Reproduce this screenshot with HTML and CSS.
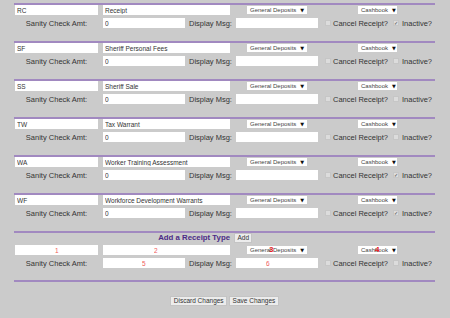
FILE: index.html
```html
<!DOCTYPE html>
<html lang="en">
<head>
    <meta charset="UTF-8">
    <title>Receipt Types</title>
    <link rel="stylesheet" href="styles.css">
</head>
<body>
    <div class="container">
        <div class="receipt-type">
            <div class="line-one">
                <input class="code" value="RC">
                <input class="name" value="Receipt">
                <span class="dropdown fund">General Deposits<span class="arrow">▼</span></span>
                <span class="dropdown book">Cashbook<span class="arrow">▼</span></span>
            </div>
            <div class="line-two">
                <span class="sanity-label">Sanity Check Amt:</span>
                <input class="amount" value="0">
                <span class="msg-label">Display Msg:</span>
                <input class="message" value="">
                <span class="check"></span><span class="check-label cancel">Cancel Receipt?</span>
                <span class="check checked">✓</span><span class="check-label">Inactive?</span>
            </div>
        </div>

        <div class="receipt-type">
            <div class="line-one">
                <input class="code" value="SF">
                <input class="name" value="Sheriff Personal Fees">
                <span class="dropdown fund">General Deposits<span class="arrow">▼</span></span>
                <span class="dropdown book">Cashbook<span class="arrow">▼</span></span>
            </div>
            <div class="line-two">
                <span class="sanity-label">Sanity Check Amt:</span>
                <input class="amount" value="0">
                <span class="msg-label">Display Msg:</span>
                <input class="message" value="">
                <span class="check"></span><span class="check-label cancel">Cancel Receipt?</span>
                <span class="check"></span><span class="check-label">Inactive?</span>
            </div>
        </div>

        <div class="receipt-type">
            <div class="line-one">
                <input class="code" value="SS">
                <input class="name" value="Sheriff Sale">
                <span class="dropdown fund">General Deposits<span class="arrow">▼</span></span>
                <span class="dropdown book">Cashbook<span class="arrow">▼</span></span>
            </div>
            <div class="line-two">
                <span class="sanity-label">Sanity Check Amt:</span>
                <input class="amount" value="0">
                <span class="msg-label">Display Msg:</span>
                <input class="message" value="">
                <span class="check"></span><span class="check-label cancel">Cancel Receipt?</span>
                <span class="check"></span><span class="check-label">Inactive?</span>
            </div>
        </div>

        <div class="receipt-type">
            <div class="line-one">
                <input class="code" value="TW">
                <input class="name" value="Tax Warrant">
                <span class="dropdown fund">General Deposits<span class="arrow">▼</span></span>
                <span class="dropdown book">Cashbook<span class="arrow">▼</span></span>
            </div>
            <div class="line-two">
                <span class="sanity-label">Sanity Check Amt:</span>
                <input class="amount" value="0">
                <span class="msg-label">Display Msg:</span>
                <input class="message" value="">
                <span class="check"></span><span class="check-label cancel">Cancel Receipt?</span>
                <span class="check"></span><span class="check-label">Inactive?</span>
            </div>
        </div>

        <div class="receipt-type">
            <div class="line-one">
                <input class="code" value="WA">
                <input class="name" value="Worker Training Assessment">
                <span class="dropdown fund">General Deposits<span class="arrow">▼</span></span>
                <span class="dropdown book">Cashbook<span class="arrow">▼</span></span>
            </div>
            <div class="line-two">
                <span class="sanity-label">Sanity Check Amt:</span>
                <input class="amount" value="0">
                <span class="msg-label">Display Msg:</span>
                <input class="message" value="">
                <span class="check"></span><span class="check-label cancel">Cancel Receipt?</span>
                <span class="check checked">✓</span><span class="check-label">Inactive?</span>
            </div>
        </div>

        <div class="receipt-type">
            <div class="line-one">
                <input class="code" value="WF">
                <input class="name" value="Workforce Development Warrants">
                <span class="dropdown fund">General Deposits<span class="arrow">▼</span></span>
                <span class="dropdown book">Cashbook<span class="arrow">▼</span></span>
            </div>
            <div class="line-two">
                <span class="sanity-label">Sanity Check Amt:</span>
                <input class="amount" value="0">
                <span class="msg-label">Display Msg:</span>
                <input class="message" value="">
                <span class="check"></span><span class="check-label cancel">Cancel Receipt?</span>
                <span class="check checked">✓</span><span class="check-label">Inactive?</span>
            </div>
        </div>

        <!-- new receipt type -->
        <div class="receipt-type add-type">
            <div class="add-title">
                <span class="add-heading">Add a Receipt Type</span>
                <button class="small-btn">Add</button>
            </div>
            <div class="line-one">
                <input class="code hint hint-1" value="1">
                <input class="name hint hint-2" value="2">
                <span class="dropdown fund">General Deposits<span class="arrow">▼</span><span class="marker marker-3">3</span></span>
                <span class="dropdown book">Cashbook<span class="arrow">▼</span><span class="marker marker-4">4</span></span>
            </div>
            <div class="line-two">
                <span class="sanity-label">Sanity Check Amt:</span>
                <input class="amount hint hint-5" value="5">
                <span class="msg-label">Display Msg:</span>
                <input class="message hint hint-6" value="6">
                <span class="check"></span><span class="check-label cancel">Cancel Receipt?</span>
                <span class="check"></span><span class="check-label">Inactive?</span>
            </div>
        </div>

        <div class="actions">
            <button class="small-btn">Discard Changes</button>
            <button class="small-btn">Save Changes</button>
        </div>
    </div>
</body>
</html>
```

FILE: styles.css
```css
* {
    margin: 0;
    padding: 0;
    box-sizing: border-box;
}

body {
    background: #cbcbcb;
    font-family: "Liberation Sans", Arial, sans-serif;
    color: #333;
    padding: 3px 15px 0 14px;
}

.container {
    width: 421px;
}

.receipt-type {
    border-top: 2px solid #a189c0;
    padding-bottom: 13px;
}

.line-one,
.line-two {
    display: flex;
    align-items: center;
    height: 10px;
}

.line-two {
    margin-top: 3px;
}

input {
    height: 10px;
    border: none;
    background: #fff;
    font-family: "Liberation Sans", Arial, sans-serif;
    font-size: 6.5px;
    color: #333;
    padding: 0 2px;
    outline: none;
}

.code {
    width: 83px;
    margin-left: 1px;
}

.name {
    width: 127px;
    margin-left: 5px;
}

.dropdown {
    position: relative;
    display: flex;
    align-items: center;
    height: 8px;
    background: #fff;
    font-size: 6px;
    color: #444;
    padding-left: 3px;
    white-space: nowrap;
}

.dropdown .arrow {
    font-family: "DejaVu Sans", sans-serif;
    font-size: 5px;
    margin-left: 4px;
    color: #111;
}

.fund {
    width: 60px;
    margin-left: 17px;
}

.book {
    width: 39px;
    margin-left: 51px;
}

.sanity-label {
    width: 85px;
    text-align: center;
    font-size: 7.5px;
}

.amount {
    width: 82px;
    margin-left: 4px;
}

.msg-label {
    width: 47px;
    margin-left: 4px;
    font-size: 7.5px;
}

.message {
    width: 82px;
}

.check {
    width: 6px;
    height: 6px;
    margin-left: 7px;
    background: #dcdcdc;
    border: 1px solid #c6c6c6;
    font-family: "DejaVu Sans", sans-serif;
    font-size: 5px;
    font-weight: bold;
    line-height: 4px;
    text-align: center;
    color: #444;
}

.check + .check-label {
    margin-left: 2px;
    font-size: 7.5px;
}

.check-label.cancel {
    width: 60px;
}

.check-label.cancel + .check {
    margin-left: 0;
}

.check-label.cancel + .check + .check-label {
    margin-left: 3px;
}

/* add row */
.add-type {
    padding-bottom: 12px;
}

.add-title {
    display: flex;
    align-items: center;
    height: 9px;
    margin-bottom: 3px;
}

.add-title + .line-one {
    margin-top: 0;
}

.add-heading {
    width: 216px;
    text-align: right;
    font-size: 7.8px;
    font-weight: bold;
    color: #4b2a86;
}

.add-title .small-btn {
    margin-left: 4px;
    width: 18px;
}

.hint {
    color: #f05a5a;
}

.hint-1 { padding-left: 40px; }
.hint-2 { padding-left: 51px; }
.hint-5 { padding-left: 39px; }
.hint-6 { padding-left: 30px; }

.marker {
    position: absolute;
    top: -1px;
    font-size: 8px;
    font-weight: bold;
    color: #e8201f;
}

.marker-3 { left: 22px; }
.marker-4 { left: 17px; }

.small-btn {
    height: 10px;
    padding: 0 2.5px;
    background: #ececec;
    border: 1px solid #c4c4c4;
    font-family: "Liberation Sans", Arial, sans-serif;
    font-size: 6.5px;
    color: #333;
    line-height: 8px;
}

.actions {
    border-top: 2px solid #a189c0;
    padding-top: 14px;
    display: flex;
    justify-content: center;
    gap: 2px;
}
```
